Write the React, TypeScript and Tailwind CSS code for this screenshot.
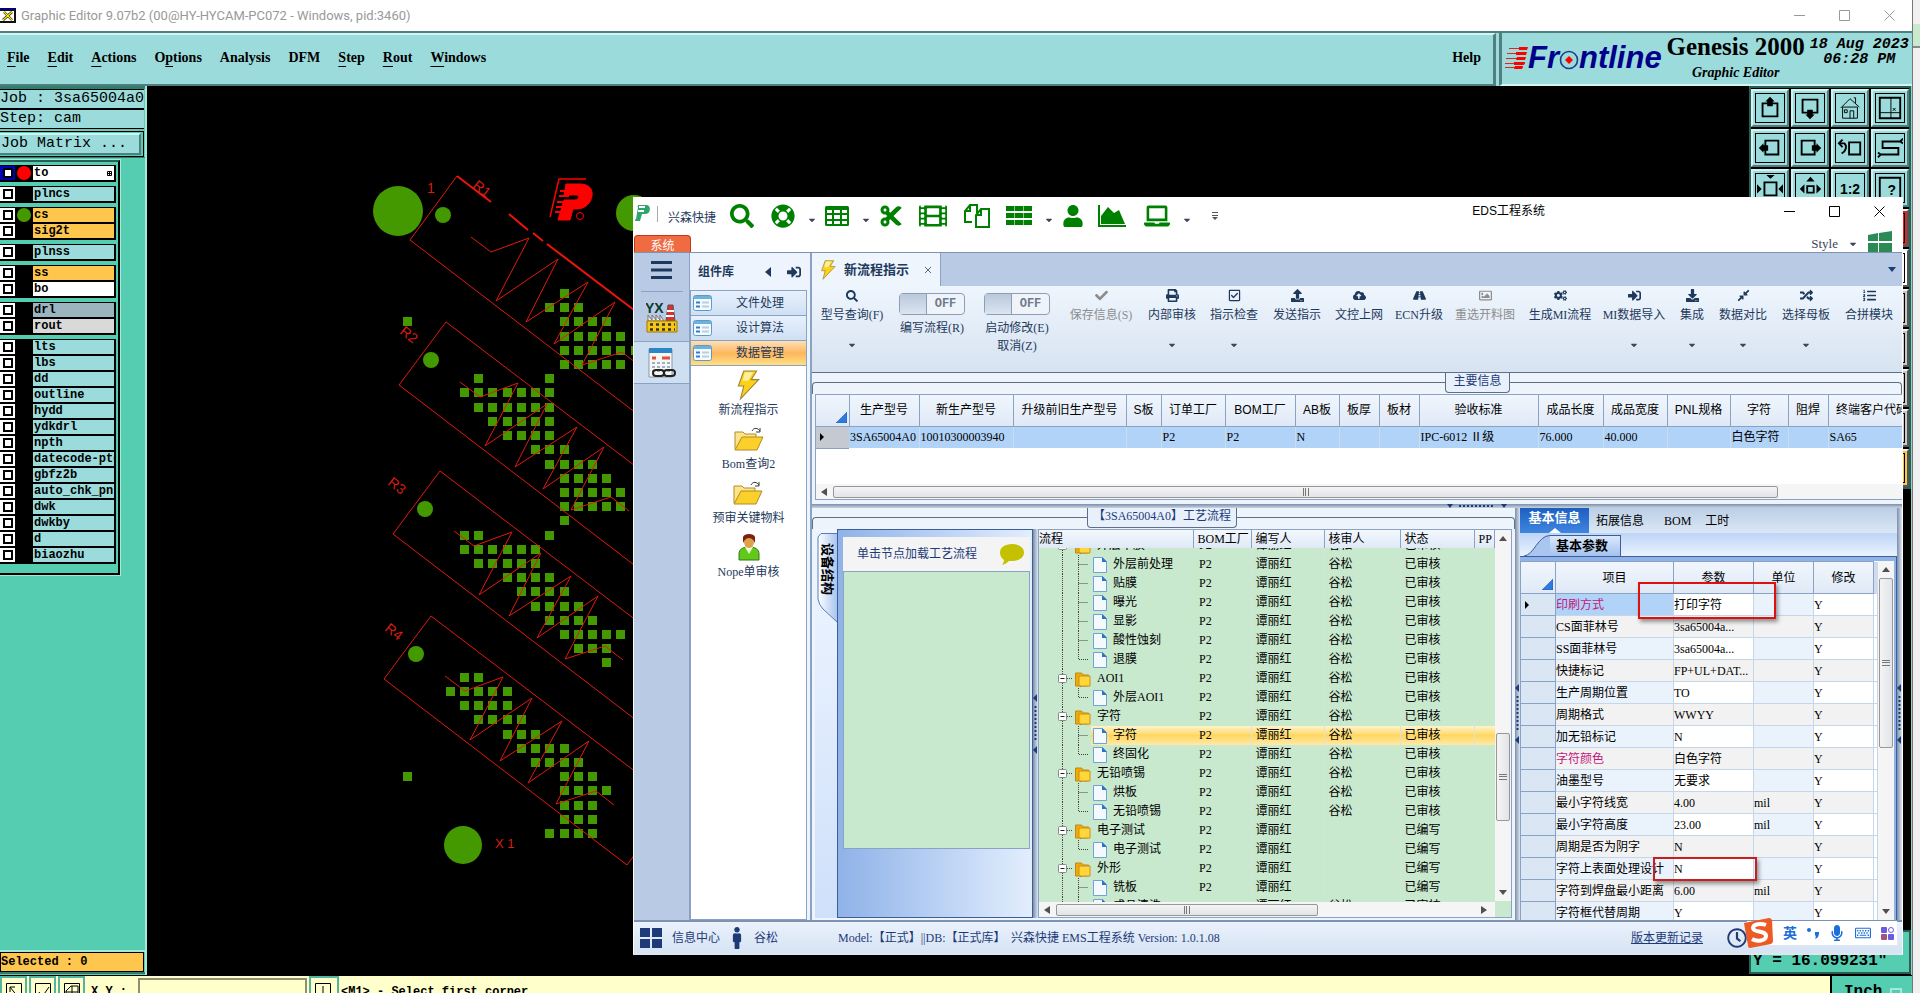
import type { ReactNode } from 'react';
import {
  FaSearch, FaLifeRing, FaCut, FaFilm, FaUser, FaLaptop, FaCheck, FaPrint, FaRegCheckSquare,
  FaUpload, FaCloudUploadAlt, FaRoad, FaRegImage, FaCogs, FaSignInAlt, FaDownload,
  FaCompressAlt, FaRandom, FaListOl, FaMale, FaRegClock, FaMicrophone, FaRegKeyboard, FaCaretDown,
} from 'react-icons/fa';

const song = "font-['Liberation_Serif','Noto_Sans_CJK_SC',serif]";
const hei = "font-['Liberation_Sans','Noto_Sans_CJK_SC',sans-serif]";
const mono = "font-['Liberation_Mono',monospace]";
const times = "font-['Liberation_Serif',serif]";

const menus = [
  ['', 'F', 'ile'], ['', 'E', 'dit'], ['', 'A', 'ctions'], ['O', 'p', 'tions'], ['Analysis', '', ''],
  ['DFM', '', ''], ['', 'S', 'tep'], ['', 'R', 'out'], ['', 'W', 'indows'],
];

interface Layer {
  name: string;
  bg: string;
  dot?: string;
  active?: boolean;
}

const cyan = 'bg-[#9bdbdb]';
const amber = 'bg-[#fec64d]';

const layerGroups: Layer[][] = [
  [{ name: 'to', bg: 'bg-white', dot: 'bg-[#ff0000]', active: true }],
  [{ name: 'plncs', bg: cyan }],
  [{ name: 'cs', bg: amber, dot: 'bg-[#459900]' }, { name: 'sig2t', bg: amber }],
  [{ name: 'plnss', bg: cyan }],
  [{ name: 'ss', bg: amber }, { name: 'bo', bg: 'bg-white' }],
  [{ name: 'drl', bg: 'bg-[#9bb5bf]' }, { name: 'rout', bg: 'bg-[#d9d9d9]' }],
  ['lts', 'lbs', 'dd', 'outline', 'hydd', 'ydkdrl', 'npth', 'datecode-ptd', 'gbfz2b', 'auto_chk_pnl', 'dwk', 'dwkby', 'd', 'biaozhu'].map(
    (name) => ({ name, bg: cyan })
  ),
];

// columns filled with a copper square, row by row, as [first, last] ranges
const copper: number[][][] = [
  [[7, 7]], [[6, 8]], [[-4, -4], [7, 10]], [[7, 11]], [[7, 12]], [[7, 11]], [[1, 1], [6, 6]], [[0, 6]],
  [[1, 6]], [[2, 6]], [[3, 6]], [[5, 7]], [[6, 9]], [[7, 10]], [[7, 11]], [[7, 11]], [[7, 7]],
  [[0, 1], [6, 6]], [[0, 5]], [[1, 5]], [[3, 6]], [[4, 7]], [[5, 8]], [[6, 9]], [[7, 11]], [[8, 10]],
  [[10, 10]], [[0, 1]], [[-1, 3]], [[0, 3]], [[1, 4]], [[3, 5]], [[4, 7]], [[5, 8]], [[-4, -4], [7, 9]],
  [[7, 10]], [[7, 9]], [[7, 9]], [[6, 9]],
];

const resistors = [
  { label: 'R2', dx: -11, dy: 145, tx: 399, ty: 333 },
  { label: 'R3', dx: -17, dy: 294, tx: 387, ty: 484 },
  { label: 'R4', dx: -26, dy: 439, tx: 384, ty: 630 },
];

const zigzag = '471,237 491,252 529,238 496,301 558,259 526,322 588,282 554,344 615,302 582,365 622,352 640,366';

const ribbon: { label: string; w: string; icon: ReactNode; caret?: boolean; off?: boolean }[] = [
  { label: '保存信息(S)', w: 'w-[86px]', icon: <FaCheck />, off: true },
  { label: '内部审核', w: 'w-[56px]', icon: <FaPrint />, caret: true },
  { label: '指示检查', w: 'w-[68px]', icon: <FaRegCheckSquare />, caret: true },
  { label: '发送指示', w: 'w-[58px]', icon: <FaUpload /> },
  { label: '文控上网', w: 'w-[66px]', icon: <FaCloudUploadAlt /> },
  { label: 'ECN升级', w: 'w-[54px]', icon: <FaRoad /> },
  { label: '重选开料图', w: 'w-[78px]', icon: <FaRegImage />, off: true },
  { label: '生成MI流程', w: 'w-[72px]', icon: <FaCogs /> },
  { label: 'MI数据导入', w: 'w-[76px]', icon: <FaSignInAlt />, caret: true },
  { label: '集成', w: 'w-[40px]', icon: <FaDownload />, caret: true },
  { label: '数据对比', w: 'w-[62px]', icon: <FaCompressAlt />, caret: true },
  { label: '选择母板', w: 'w-[64px]', icon: <FaRandom />, caret: true },
  { label: '合拼模块', w: 'w-[62px]', icon: <FaListOl /> },
];

const mainCols: [string, string, string][] = [
  ['生产型号', 'w-[70px]', '3SA65004A0'],
  ['新生产型号', 'w-[94px]', '10010300003940'],
  ['升级前旧生产型号', 'w-[113px]', ''],
  ['S板', 'w-[35px]', ''],
  ['订单工厂', 'w-[64px]', 'P2'],
  ['BOM工厂', 'w-[70px]', 'P2'],
  ['AB板', 'w-[44px]', 'N'],
  ['板厚', 'w-[40px]', ''],
  ['板材', 'w-[40px]', ''],
  ['验收标准', 'w-[119px]', 'IPC-6012 Ⅱ级'],
  ['成品长度', 'w-[65px]', '76.000'],
  ['成品宽度', 'w-[64px]', '40.000'],
  ['PNL规格', 'w-[63px]', ''],
  ['字符', 'w-[58px]', '白色字符'],
  ['阻焊', 'w-[40px]', ''],
  ['终端客户代码', 'w-[88px]', 'SA65'],
];

interface Node {
  name: string;
  folder?: boolean;
  last?: boolean;
  checker?: string;
  state?: string;
  selected?: boolean;
}

const tree: Node[] = [
  { name: '外层干膜', folder: true },
  { name: '外层前处理' },
  { name: '贴膜' },
  { name: '曝光' },
  { name: '显影' },
  { name: '酸性蚀刻' },
  { name: '退膜', last: true },
  { name: 'AOI1', folder: true },
  { name: '外层AOI1', last: true },
  { name: '字符', folder: true },
  { name: '字符', selected: true },
  { name: '终固化', last: true },
  { name: '无铅喷锡', folder: true },
  { name: '烘板' },
  { name: '无铅喷锡', last: true },
  { name: '电子测试', folder: true, checker: '', state: '已编写' },
  { name: '电子测试', last: true, checker: '', state: '已编写' },
  { name: '外形', folder: true, checker: '', state: '已编写' },
  { name: '铣板', checker: '', state: '已编写' },
  { name: '成品清洗' },
];

const params: [string, string, string, boolean?][] = [
  ['印刷方式', '打印字符', '', true],
  ['CS面菲林号', '3sa65004a...', ''],
  ['SS面菲林号', '3sa65004a...', ''],
  ['快捷标记', 'FP+UL+DAT...', ''],
  ['生产周期位置', 'TO', ''],
  ['周期格式', 'WWYY', ''],
  ['加无铅标记', 'N', ''],
  ['字符颜色', '白色字符', '', true],
  ['油墨型号', '无要求', ''],
  ['最小字符线宽', '4.00', 'mil'],
  ['最小字符高度', '23.00', 'mil'],
  ['周期是否为阴字', 'N', ''],
  ['字符上表面处理设计', 'N', ''],
  ['字符到焊盘最小距离', '6.00', 'mil'],
  ['字符框代替周期', 'Y', ''],
];

function WindowButtons({ color }: { color: string }) {
  return (
    <div className={`flex ${color}`}>
      <button aria-label="Minimize" className="flex h-7 w-[45px] items-center justify-center">
        <svg width="11" height="11"><path d="M0 5.5h11" stroke="currentColor" /></svg>
      </button>
      <button aria-label="Maximize" className="flex h-7 w-[45px] items-center justify-center">
        <svg width="11" height="11"><path d="M.5 .5h10v10h-10z" fill="none" stroke="currentColor" /></svg>
      </button>
      <button aria-label="Close" className="flex h-7 w-[45px] items-center justify-center">
        <svg width="11" height="11"><path d="M.5 .5l10 10M10.5 .5l-10 10" stroke="currentColor" /></svg>
      </button>
    </div>
  );
}

function FrontlineLogo() {
  return (
    <div className="flex h-9 items-center font-['Liberation_Sans',sans-serif] text-[31px] leading-9 font-bold text-[#00008b] italic">
      <svg width="23" height="26" viewBox="0 0 23 26" className="shrink-0">
        <g stroke="#e8201c" strokeWidth="1">
          <path d="M4 3.5h18M2 8.5h18M1 13.5h19M0 18.5h20M0 22.5h18" />
        </g>
        <g fill="#f00">
          <path d="M14 2h9l-1 3h-8zM11 7h11l-1 3H11zM12 12h9l-1 3h-9zM9 17h11l-1 3H9zM10 21h8l-1 3h-8z" />
        </g>
      </svg>
      Fr
      <svg width="20" height="20" viewBox="0 0 20 20" className="mt-1 shrink-0">
        <circle cx="10" cy="10" r="8.5" fill="none" stroke="#1c3c8c" strokeWidth="1.6" />
        <path d="M10 6l4 4-4 4-4-4z" fill="#f00" />
      </svg>
      ntline
    </div>
  );
}

function EditorHeader() {
  return (
    <>
      <header className="flex h-[31px] shrink-0 items-center bg-white">
        <svg width="16" height="16" viewBox="0 0 16 16" className="mr-[5px] shrink-0">
          <path d="M0 0h16v15H0z" fill="#111" />
          <path d="M0 3h14v10H0z" fill="#fff" />
          <path d="M0 0h16v2H0z" fill="#00007b" />
          <path d="M4 4l8 8M12 4l-9 8" stroke="#111" strokeWidth="2.4" />
          <path d="M4 4l8 8M12 4l-9 8" stroke="#ffef00" strokeWidth="1.2" />
        </svg>
        <h1 className="grow font-[Roboto,sans-serif] text-[13px] leading-4 whitespace-nowrap text-[#999]">
          Graphic Editor 9.07b2 (00@HY-HYCAM-PC072 - Windows, pid:3460)
        </h1>
        <WindowButtons color="text-[#999]" />
      </header>
      <div className={`flex h-[55px] shrink-0 border-t-2 border-[#4f7f7f] bg-[#9bdbdb] ${times}`}>
        <nav className="flex grow items-center gap-[18px] border-t-2 border-r-[3px] border-b-2 border-t-[#d5f3f3] border-r-[#4f7f7f] border-b-[#4f7f7f] pr-3 pb-1 pl-[7px] text-sm leading-4 font-bold">
          {menus.map(([pre, key, post]) => (
            <button key={pre + key + post}>
              {pre}
              <span className="underline underline-offset-4">{key}</span>
              {post}
            </button>
          ))}
          <button className="ml-auto">Help</button>
        </nav>
        <div className="ml-[3px] flex w-[413px] items-start border-b-2 border-l-[3px] border-b-[#d5f3f3] border-l-[#4f7f7f] pl-[3px]">
          <div className="pt-[7px]"><FrontlineLogo /></div>
          <div className="flex w-[148px] flex-col items-center">
            <span className="text-[25px] leading-7 font-bold whitespace-nowrap">Genesis 2000</span>
            <span className="pt-1 text-sm leading-4 font-bold italic">Graphic Editor</span>
          </div>
          <div className={`${mono} pt-1 text-center text-[15px] leading-[15px] font-bold whitespace-nowrap italic`}>
            18 Aug 2023<br />06:28 PM
          </div>
        </div>
      </div>
    </>
  );
}

function LayerPanel() {
  return (
    <aside className={`flex w-[147px] shrink-0 flex-col border-r-2 border-[#a5e8dc] bg-[#54cdb0] ${mono}`}>
      <div className="border-t-[3px] border-b border-[#2f7d6d] bg-[#6fc4b4] pr-px">
        <p className="h-5 border border-x-0 border-black bg-[#9bdbdb] text-[15px] leading-[18px] whitespace-nowrap">Job : 3sa65004a0</p>
        <p className="h-5 border border-x-0 border-black bg-[#9bdbdb] text-[15px] leading-[18px] whitespace-nowrap">Step: cam</p>
        <div className="mt-0.5 border border-l-0 border-black bg-[#54cdb0] py-px pr-0.5">
          <button className="block h-[22px] w-full border-t-2 border-r-2 border-b-2 border-t-[#cdf3f3] border-r-[#4f7f7f] border-b-[#4f7f7f] bg-[#9bdbdb] pl-px text-left text-[15px] leading-[18px]">
            Job Matrix ...
          </button>
        </div>
      </div>
      <div className="mt-0.5 flex w-[120px] flex-col gap-1 border-t-2 border-r-2 border-b-2 border-t-[#2a5f55] border-r-black border-b-black pt-[3px] pb-[9px] outline-1 outline-[#a5e8dc]">
        {layerGroups.map((group) => (
          <ul key={group[0].name} className="mr-0.5 bg-black pb-px">
            {group.map((l) => (
              <li key={l.name} className="flex h-4 items-center">
                <span className={`flex h-3.5 w-[15px] shrink-0 items-center justify-center ${l.active ? 'bg-[#0000b8]' : 'bg-white'}`}>
                  <span className="h-2.5 w-2.5 border-2 border-black bg-white" />
                </span>
                <span className={`mx-0.5 h-3.5 w-3.5 shrink-0 rounded-full ${l.dot ?? 'bg-black'}`} />
                <span className={`mr-0.5 flex h-3.5 min-w-0 grow items-center overflow-hidden pl-px text-xs leading-3.5 font-bold whitespace-nowrap ${l.bg}`}>
                  {l.name}
                  {l.active && (
                    <svg width="5" height="5" viewBox="0 0 5 5" className="mr-0.5 ml-auto">
                      <path d="M.5 .5h4v4h-4zM2.5 0v5M0 2.5h5" fill="none" stroke="#000" />
                    </svg>
                  )}
                </span>
              </li>
            ))}
          </ul>
        ))}
      </div>
      <div className="mt-auto mb-px border-y-2 border-t-[#a5e8dc] border-b-[#2f7d6d] pr-px">
        <p className="h-5 border border-black bg-[#fec64d] text-xs leading-[18px] font-bold">Selected : 0</p>
      </div>
    </aside>
  );
}

function Board() {
  return (
    <svg width="500" height="889" viewBox="147 86 500 889" className="shrink-0">
      <g fill="#459900" shapeRendering="crispEdges">
        {copper.map((ranges, row) =>
          ranges.map(([from, to]) =>
            Array.from({ length: to - from + 1 }, (_, i) => (
              <rect key={`${row}-${from + i}`} x={Math.round(460 + 14.22 * (from + i))} y={Math.round(289 + 14.21 * row)} width="9" height="9" />
            ))
          )
        )}
      </g>
      <g fill="#459900">
        <circle cx="398" cy="211" r="25" />
        <circle cx="443" cy="215" r="8" />
        <circle cx="634" cy="213" r="18" />
        <circle cx="431" cy="360" r="8" />
        <circle cx="425" cy="509" r="8" />
        <circle cx="416" cy="654" r="8" />
        <circle cx="463" cy="845" r="19" />
      </g>
      <g fill="none" stroke="#e01a0e">
        <path d="M457 176L410 240L653 426" />
        <path d="M457 176L491 202M509 214L528 230M533 233L543 241M547 244L634 310" strokeWidth="2" stroke="#f01408" />
        <polyline points={zigzag} />
        {resistors.map((r) => (
          <g key={r.label} transform={`translate(${r.dx} ${r.dy})`}>
            <polygon points="457,177 410,240 653,426 700,362" />
            <polyline points={zigzag} />
          </g>
        ))}
      </g>
      <g fill="#d91e10" fontFamily="Liberation Sans, sans-serif" fontSize="14">
        <text x="427" y="193">1</text>
        <text transform="translate(472 187) rotate(38)">R1</text>
        {resistors.map((r) => (
          <text key={r.label} transform={`translate(${r.tx} ${r.ty}) rotate(38)`}>{r.label}</text>
        ))}
        <text x="495" y="848" fontSize="13">X 1</text>
      </g>
      <g stroke="#f00" fill="none">
        <path d="M586 179h-27l-9 38" strokeWidth="1.5" />
        <path d="M566 184h14c9 0 13 5 12 12s-7 13-15 13h-4l-3 11h-12l6-20h11c4 0 5-5 1-5h-12z" fill="#f00" />
        <path d="M560 191h10M559 196h10M557 202h10M556 207h8M555 212h8" strokeWidth="2" />
        <circle cx="580" cy="216" r="3.5" />
      </g>
    </svg>
  );
}

const viewIcons: ReactNode[] = [
  <g key="u"><path d="M6 9h16v14H6z" fill="none" stroke="#000" strokeWidth="2" /><path d="M14 2l5 5h-2v5h-6V7H9z" /></g>,
  <g key="d"><path d="M6 5h16v14H6z" fill="none" stroke="#000" strokeWidth="2" /><path d="M14 26l5-5h-2v-5h-6v5H9z" /></g>,
  <g key="h" fill="none" stroke="#000"><path d="M6 13h16v12H6zM4 14L14 4l10 9M20 9V3h-2M14 25v-8h4v8M8 16h3v3H8z" /></g>,
  <g key="xy" fill="none" stroke="#000"><path d="M3 3h22v22H3z" strokeWidth="2" /><path d="M15 3v22M3 19h22M17 14l3 3M20 14l-3 3" /></g>,
  <g key="l"><path d="M9 6h14v15H9z" fill="none" stroke="#000" strokeWidth="2" /><path d="M2 14l5-5v2h5v6H7v2z" /></g>,
  <g key="r"><path d="M5 6h14v15H5z" fill="none" stroke="#000" strokeWidth="2" /><path d="M26 14l-5-5v2h-5v6h5v2z" /></g>,
  <g key="b"><path d="M13 8h12v13H13z" fill="none" stroke="#000" strokeWidth="2" /><path d="M3 9h5c3 3 2 8-3 11M6 5L2 9l4 4" fill="none" stroke="#000" strokeWidth="2" /></g>,
  <g key="s"><path d="M25 7H6v7h17v7H4M25 7l3-3M25 7l3 2M4 21l-3-2M4 21l-3 3" fill="none" stroke="#000" strokeWidth="2" /></g>,
  <g key="in"><path d="M8 8h13v14H8z" fill="none" stroke="#000" strokeWidth="2" /><path d="M10 0h9l-4.500 4zM0 10l5 5-5 5zM28 10l-5 5 5 5z" /></g>,
  <g key="out"><path d="M11 12h7v7h-7z" fill="none" stroke="#000" strokeWidth="2" /><path d="M10 7h9l-4.500-5zM8 10v10l-5-5zM21 10v10l5-5zM10 24h9l-4.500 4z" /></g>,
  <text key="t" x="14" y="20" textAnchor="middle" fontSize="15" fontWeight="bold" fontFamily="Liberation Sans, sans-serif">1:2</text>,
  <g key="q"><path d="M3 3h22v26H3z" fill="none" stroke="#000" strokeWidth="2" /><text x="16" y="21" textAnchor="middle" fontSize="15" fontWeight="bold" fontFamily="Liberation Sans, sans-serif">?</text></g>,
];

function ToolPad() {
  const tail = ['bg-[#d42a2a]', 'bg-white', 'bg-[#c9c9c9]', 'bg-[#c9c9c9]', 'bg-[#c9c9c9]', 'bg-[#c9c9c9]', 'bg-[#fec64d]'];
  return (
    <aside className="flex w-[163px] shrink-0 flex-col border-r border-[#8fd5c6] bg-black">
      <div className="grid grid-cols-4 gap-0.5 border-2 border-[#2a5f55] bg-black pt-px">
        {viewIcons.map((icon, i) => (
          <button key={i} aria-label="View tool" className="h-[38px] border-2 border-t-[#d5f3f3] border-r-[#4f7f7f] border-b-[#4f7f7f] border-l-[#d5f3f3] bg-[#9bdbdb] p-0.5">
            <span className="flex h-full items-center justify-center border border-black">
              <svg width="26" height="26" viewBox="0 0 28 28">{icon}</svg>
            </span>
          </button>
        ))}
        {tail.map((bg, i) => (
          <button key={i} aria-label="Edit tool" className={`col-start-4 h-[38px] border-2 border-t-[#eee] border-r-[#555] border-b-[#555] border-l-[#eee] p-0.5 ${bg}`}>
            <span className="block h-full border border-black" />
          </button>
        ))}
      </div>
      <p className={`mt-auto mb-px flex h-11 items-end border-2 border-[#2a5f55] bg-[#54cdb0] pb-[3px] pl-0.5 text-base leading-4 font-bold whitespace-nowrap ${mono}`}>
        Y = 16.099231"
      </p>
    </aside>
  );
}

function CommandBar() {
  const marks = ['M4 4l8 10M4 4v5M4 4h5', 'M4 9l3 5 7-10', 'M2 14V8l5-5h7v11M8 3v11M2 9h12'];
  return (
    <footer className={`flex h-[18px] shrink-0 overflow-hidden border-t border-black bg-[#ffffcc] text-sm font-bold ${mono}`}>
      {marks.map((d) => (
        <button key={d} aria-label="Snap mode" className="mr-0.5 h-8 w-[27px] shrink-0 border-2 border-[#54b59e] bg-[#ffffcc] px-1 pt-0.5">
          <svg width="16" height="20"><path d="M.5 .5h15v20h-15z" fill="none" stroke="#000" /><path d={d} fill="none" stroke="#000" /></svg>
        </button>
      ))}
      <label htmlFor="xy" className="w-[51px] shrink-0 pt-2 pl-1 text-xs leading-4 whitespace-pre">X Y :</label>
      <input id="xy" className="mt-0.5 h-8 w-[169px] shrink-0 border-2 border-[#8f8f72] bg-[#ffffcc] px-1" />
      <button aria-label="Info" className="ml-0.5 h-8 w-[30px] shrink-0 border-2 border-[#54b59e] px-1 pt-0.5">
        <svg width="16" height="20"><path d="M.5 .5h15v20h-15zM8 3v14" fill="none" stroke="#000" /></svg>
      </button>
      <output className="grow pt-2 pl-0.5 text-xs leading-4 whitespace-nowrap">&lt;M1&gt; - Select first corner</output>
      <button className={`flex h-8 w-20 shrink-0 gap-2 border-4 border-[#54cdb0] bg-[#54cdb0] pt-1 pl-2 text-base leading-4 outline-2 outline-black ${mono}`}>
        Inch
        <span className="mt-1 h-3 w-3 border-2 border-[#a5e8dc]" />
      </button>
    </footer>
  );
}

function Caret() {
  return <FaCaretDown className="h-2.5 w-2.5 shrink-0 text-[#3b4659]" />;
}

function QuickAccess() {
  return (
    <div className="flex items-center text-2xl text-[#008000]">
      <button aria-label="Search"><FaSearch /></button>
      <button aria-label="Help" className="ml-[17px]"><FaLifeRing /></button>
      <span className="ml-3 pt-2"><Caret /></span>
      <button aria-label="Table" className="ml-2">
        <svg width="24" height="20" viewBox="0 0 24 20">
          <rect width="24" height="20" rx="1.500" fill="currentColor" />
          <path d="M2 4h5v3H2zM9 4h6v3H9zM17 4h5v3h-5zM2 9h5v4H2zM9 9h6v4H9zM17 9h5v4h-5zM2 15h5v3H2zM9 15h6v3H9zM17 15h5v3h-5z" fill="#fff" />
        </svg>
      </button>
      <span className="ml-3 pt-2"><Caret /></span>
      <button aria-label="Cut" className="ml-2"><FaCut /></button>
      <button aria-label="Film" className="ml-4"><FaFilm className="h-7 w-7" /></button>
      <button aria-label="Copy" className="ml-[17px]">
        <svg width="26" height="24" viewBox="0 0 26 24" fill="none" stroke="currentColor" strokeWidth="2">
          <path d="M8 18H1V7l5-6h7v8M6 1v6H1M12 23V11l5-6h8v18zM17 5v6h-5" />
        </svg>
      </button>
      <button aria-label="Rows" className="ml-4">
        <svg width="26" height="20" viewBox="0 0 26 20">
          <path d="M0 0h26v5H0zM0 7h26v5H0zM0 14h26v5H0z" fill="currentColor" />
          <path d="M8.500 0v20M17.500 0v20" stroke="#fff" strokeOpacity=".55" />
        </svg>
      </button>
      <span className="ml-3 pt-2"><Caret /></span>
      <button aria-label="User" className="ml-2"><FaUser className="h-[22px] w-[22px]" /></button>
      <button aria-label="Chart" className="ml-3.5">
        <svg width="28" height="22" viewBox="0 0 28 22">
          <path d="M1 0v21h27" fill="none" stroke="currentColor" strokeWidth="2" />
          <path d="M3 19v-8l7-9 6 6 5-3 6 14z" fill="currentColor" />
        </svg>
      </button>
      <button aria-label="Laptop" className="ml-[18px]"><FaLaptop className="h-[26px] w-[26px]" /></button>
      <span className="ml-3 pt-2"><Caret /></span>
      <svg width="6" height="8" viewBox="0 0 6 8" className="ml-5"><path d="M0 .5h6M0 3.500h6" stroke="#555" /><path d="M0 5h6L3 8z" fill="#555" /></svg>
    </div>
  );
}

function Bolt({ size }: { size: number }) {
  return (
    <svg width={size} height={size} viewBox="0 0 24 28" className="shrink-0">
      <path d="M8 1h12l-5 8h7L5 27l3-12H3z" fill="#fbd11a" stroke="#a08038" />
      <path d="M9 2h8l-5 8H7z" fill="#fff19a" />
    </svg>
  );
}

function Folder() {
  return (
    <svg width="30" height="24" viewBox="0 0 30 24">
      <path d="M1 22V5h8l2 2h11v4" fill="#fde48a" stroke="#b08c28" />
      <path d="M1 23l7-13h21l-6 13z" fill="#fbd02a" stroke="#b08c28" />
      <path d="M18 4c2-4 6-3 8 0M26 1v4h-4" fill="none" stroke="#3b3b3b" />
    </svg>
  );
}

function Person() {
  return (
    <svg width="22" height="28" viewBox="0 0 22 28">
      <path d="M1 27v-6c0-5 4-7 10-7s10 2 10 7v6z" fill="#62c81a" stroke="#2f7d10" />
      <path d="M7 14l4 7 4-7z" fill="#e8ffd8" />
      <ellipse cx="11" cy="9" rx="5" ry="6" fill="#e0a04c" />
      <path d="M5 10V4c1-4 11-4 12 0v6c-2-4-4-5-6-5s-4 1-6 5z" fill="#7c2210" />
    </svg>
  );
}

function ComponentLibrary() {
  const groups = ['文件处理', '设计算法', '数据管理'];
  const items: [string, ReactNode][] = [
    ['新流程指示', <Bolt key="b" size={30} />],
    ['Bom查询2', <Folder key="f" />],
    ['预审关键物料', <Folder key="g" />],
    ['Nope单审核', <Person key="p" />],
  ];
  return (
    <div className={`flex w-[122px] shrink-0 flex-col border-x border-[#8aa3c4] bg-[#edf4fd] pr-[3px] text-[#1e395b] ${song}`}>
      <div className="flex h-[37px] shrink-0 items-center gap-3 pl-2 text-xs font-bold">
        <h2 className="grow">组件库</h2>
        <svg width="6" height="10" className="mr-1"><path d="M6 0v10L0 5z" fill="currentColor" /></svg>
        <FaSignInAlt className="mr-1.5 h-3.5 w-3.5" />
      </div>
      {groups.map((g, i) => (
        <button
          key={g}
          className={`flex h-[25px] shrink-0 items-center border border-b-0 border-[#8aa3c4] bg-linear-to-b text-xs ${
            i === 2 ? 'from-[#fde0b5] via-[#fdb75c] to-[#fedf85]' : 'from-[#e8f1fc] to-[#cfe0f4]'
          }`}
        >
          <svg width="19" height="16" viewBox="0 0 19 16" className="mx-0.5 shrink-0">
            <rect x=".5" y=".5" width="18" height="15" rx="2" fill="#f4faff" stroke="#5b9bc8" />
            <path d="M1 2.500h17" stroke="#6cb2dd" strokeWidth="3" />
            <path d="M3 7.500h4M3 11.500h4" stroke="#2f7fd1" strokeWidth="2" />
            <path d="M9 7.500h7M9 11.500h7" stroke="#b9cede" strokeWidth="2" />
          </svg>
          <span className="grow text-center">{g}</span>
        </button>
      ))}
      <div className="flex grow flex-col items-center border border-[#8aa3c4] bg-white pt-[3px] text-xs">
        {items.map(([label, icon]) => (
          <button key={label} className="flex h-[54px] flex-col items-center justify-between pb-1">
            <span className="flex h-8 items-center">{icon}</span>
            <span className="leading-[18px]">{label}</span>
          </button>
        ))}
      </div>
    </div>
  );
}

function IconRail() {
  return (
    <div className="flex w-[55px] shrink-0 flex-col items-center bg-[#b9cbe4]">
      <button aria-label="Menu" className="flex h-[39px] w-[42px] items-center justify-center border-b border-[#8aa3c4] pb-1">
        <svg width="21" height="18"><path d="M0 1.500h21M0 9h21M0 16.500h21" stroke="#1e395b" strokeWidth="3" /></svg>
      </button>
      <button aria-label="Factory" className="flex h-[49px] items-center">
        <svg width="32" height="32" viewBox="0 0 32 32">
          <text x="-1" y="12" fontSize="14" fontWeight="bold" fontFamily="Liberation Sans, sans-serif" fill="#0d3b2c">YX</text>
          <path d="M20 20l2-16h5l2 16z" fill="#d93030" stroke="#555" />
          <path d="M21 10h7M20 15h8" stroke="#fff" strokeWidth="2" />
          <path d="M2 20v-6l4 5v-5l4 5v-5l4 5v-5l4 6z" fill="#eee" stroke="#777" />
          <path d="M1 20h30v11H1z" fill="#f5c518" stroke="#a07b00" />
          <path d="M4 23.500h25M4 28.500h25" stroke="#333" strokeWidth="2.500" strokeDasharray="3 3" />
        </svg>
      </button>
      <button aria-label="Calendar" className="flex h-[43px] w-full items-center justify-center border-y border-[#8aa3c4] bg-[#cfdff2]">
        <svg width="32" height="32" viewBox="0 0 32 32">
          <path d="M3 2h23v28H3z" fill="#f6f6f6" stroke="#8b98a8" />
          <path d="M3 1h23v5H3z" fill="#2c86c4" />
          <path d="M6 11h4M16 11h8" stroke="#e0503a" strokeWidth="3" />
          <path d="M6 16h18M6 20h18M6 24h18" stroke="#9fb0c2" strokeWidth="2" strokeDasharray="3 2" />
          <rect x="7" y="23" width="11" height="6" rx="3" fill="none" stroke="#222" strokeWidth="2" />
          <rect x="18" y="23" width="11" height="6" rx="3" fill="none" stroke="#222" strokeWidth="2" />
        </svg>
      </button>
    </div>
  );
}

function Toggle({ lines, w }: { lines: string[]; w: string }) {
  return (
    <div className={`flex shrink-0 flex-col items-center pt-[7px] ${w}`}>
      <button role="switch" aria-checked="false" aria-label={lines[0]} className="flex h-[22px] w-[66px] rounded-sm border border-[#8d9eb5] bg-[#eff4fa]">
        <span className="h-full w-[27px] border-r border-[#8d9eb5] bg-linear-to-b from-[#b9c8da] to-[#dbe5f1]" />
        <span className={`grow text-xs leading-5 font-bold text-[#6d7b8c] ${mono}`}>OFF</span>
      </button>
      {lines.map((l, i) => (
        <span key={l} className={`leading-4 ${i ? 'pt-0.5' : 'pt-[5px]'}`}>{l}</span>
      ))}
    </div>
  );
}

function Ribbon() {
  return (
    <div className="flex h-[87px] shrink-0 overflow-hidden border-b border-[#5f6f88] bg-linear-to-b from-[#eef5fd] to-[#d7e3f1] pl-1 text-xs whitespace-nowrap text-[#1e395b]">
      <button className="flex w-[72px] shrink-0 flex-col items-center pt-0.5">
        <FaSearch className="mt-0.5 h-3 w-3" />
        <span className="pt-1 leading-[18px]">型号查询(F)</span>
        <span className="pt-4"><Caret /></span>
      </button>
      <Toggle w="w-[88px]" lines={['编写流程(R)']} />
      <Toggle w="w-[82px]" lines={['启动修改(E)', '取消(Z)']} />
      {ribbon.map((b) => (
        <button key={b.label} disabled={b.off} className={`flex shrink-0 flex-col items-center pt-0.5 ${b.w} ${b.off ? 'text-[#8d8d8d]' : ''}`}>
          <span className="flex h-3.5 items-center text-[13px]">{b.icon}</span>
          <span className="pt-1 leading-[18px]">{b.label}</span>
          {b.caret && <span className="pt-4"><Caret /></span>}
        </button>
      ))}
    </div>
  );
}

function HScroll({ thumb, right }: { thumb: string; right?: boolean }) {
  return (
    <div className="flex h-[15px] shrink-0 items-center bg-[#f5f5f5] px-1">
      <svg width="6" height="8" className="mr-1.5 ml-px shrink-0"><path d="M6 0v8L0 4z" fill="#505050" /></svg>
      <div className={`flex h-3 items-center justify-center rounded-xs border border-[#979797] bg-linear-to-b from-[#f4f4f4] to-[#e2e4e8] ${thumb}`}>
        <span className="h-2 w-[3px] border-x border-[#777]" />
        <span className="h-2 w-[3px] border-r border-[#777]" />
      </div>
      {right && <svg width="6" height="8" className="mr-1 ml-auto shrink-0"><path d="M0 0v8l6-4z" fill="#505050" /></svg>}
    </div>
  );
}

function VScroll({ before, thumb }: { before: string; thumb: string }) {
  return (
    <div className="flex w-4 shrink-0 flex-col items-center bg-[#f5f5f5]">
      <svg width="8" height="5" className="my-1.5 shrink-0"><path d="M0 5h8L4 0z" fill="#505050" /></svg>
      <div className={before} />
      <div className={`flex w-3.5 flex-col items-center justify-center rounded-xs border border-[#979797] bg-linear-to-r from-[#f4f4f4] to-[#e2e4e8] ${thumb}`}>
        <span className="h-[3px] w-2 border-y border-[#777]" />
        <span className="h-[3px] w-2 border-b border-[#777]" />
      </div>
      <svg width="8" height="5" className="mt-auto mb-1.5 shrink-0"><path d="M0 0h8L4 5z" fill="#505050" /></svg>
    </div>
  );
}

function CornerMark() {
  return (
    <svg width="11" height="11" className="mt-3.5 mr-0.5 ml-auto"><path d="M11 0v11H0z" fill="#2f7ae0" stroke="#1c4fa0" strokeWidth=".5" /></svg>
  );
}

function GroupTitle({ children, w, lead }: { children: ReactNode; w: string; lead: string }) {
  return (
    <div className={`flex h-[21px] shrink-0 items-start text-xs text-[#1e3a78] ${song}`}>
      <span className={`mt-[9px] h-3 rounded-tl border-t border-l border-[#5f6f88] ${lead}`} />
      <span className={`h-5 shrink-0 rounded-b border border-t-0 border-[#5f6f88] bg-[#e8f0fb] text-center leading-4 whitespace-nowrap ${w}`}>{children}</span>
      <span className="mt-[9px] h-3 grow rounded-tr border-t border-r border-[#5f6f88]" />
    </div>
  );
}

function MainGrid() {
  return (
    <section className="flex h-[131px] shrink-0 flex-col bg-[#eef4fc]">
      <GroupTitle w="w-[65px]" lead="w-[633px]">主要信息</GroupTitle>
      <div className="ml-[3px] flex grow flex-col overflow-hidden border border-r-0 border-[#8aa3c4] bg-white">
        <table className="w-[1100px] table-fixed border-collapse text-xs whitespace-nowrap">
          <thead>
            <tr className={`h-[31px] bg-linear-to-b from-[#f1f6fd] to-[#dfe9f6] ${hei}`}>
              <th className="w-[33px] border border-t-0 border-l-0 border-[#8aa3c4] p-0"><CornerMark /></th>
              {mainCols.map(([name, w]) => (
                <th key={name} className={`border border-t-0 border-[#8aa3c4] p-0 font-normal ${w}`}>{name}</th>
              ))}
            </tr>
          </thead>
          <tbody>
            <tr className={`h-[22px] bg-[#b0d3f7] ${song}`}>
              <td className="border-b border-[#8aa3c4] bg-[#c5cad2] pl-1">
                <svg width="4" height="8"><path d="M0 0v8l4-4z" /></svg>
              </td>
              {mainCols.map(([name, , value]) => (
                <td key={name} className="border-r border-[#c9dcf2] p-0 pl-px leading-4">{value}</td>
              ))}
            </tr>
          </tbody>
        </table>
        <div className="mt-auto">
          <HScroll thumb="w-[945px]" />
        </div>
      </div>
      <div className="h-1 shrink-0" />
    </section>
  );
}

function DeviceTree() {
  return (
    <div className="flex w-[218px] shrink-0 bg-linear-to-b from-[#f0f6ff] to-[#cfe0fa]">
      <div className="w-[22px] shrink-0">
        <button className="relative mt-1 ml-0.5 flex h-[90px] w-5 items-start pt-2.5">
          <svg width="20" height="90" className="absolute top-0 left-0">
            <defs>
              <linearGradient id="tab"><stop stopColor="#fff" /><stop offset="1" stopColor="#a9c4ee" /></linearGradient>
            </defs>
            <path d="M20 .5H4L1 4v62q1 6 5 10l14 13" fill="url(#tab)" stroke="#5a7cb8" />
          </svg>
          <span className={`relative text-[13px] leading-5 font-bold [text-orientation:sideways] [writing-mode:vertical-rl] ${hei}`}>设备结构</span>
        </button>
      </div>
      <div className="flex grow flex-col border border-[#3c5f9c] bg-linear-to-r from-[#8fb2e8] to-[#e3eefd] pt-[7px] pr-0.5 pb-[68px] pl-[5px]">
        <div className="flex h-[34px] shrink-0 items-center justify-between bg-[#f4f4f4] pr-1.5 pl-3.5">
          <span className={`text-xs text-[#1e3a78] ${song}`}>单击节点加载工艺流程</span>
          <svg width="24" height="21" viewBox="0 0 24 21"><path d="M12 0c7 0 12 3.500 12 8.500S19 17 12 17l-3 0c-2 2-4 3-7 4 1-2 2-3 2-5C1 14 0 11 0 8.500 0 3.500 5 0 12 0z" fill="#c4c200" /></svg>
        </div>
        <div className="grow border border-[#8aa3c4] bg-[#c9e9ce]" />
      </div>
    </div>
  );
}

function TreeCols() {
  return (
    <colgroup>
      <col className="w-[154px]" />
      <col className="w-[58px]" />
      <col className="w-[73px]" />
      <col className="w-[76px]" />
      <col className="w-[74px]" />
      <col />
    </colgroup>
  );
}

function TreeCell({ node }: { node: Node }) {
  if (node.folder) {
    return (
      <div className="flex h-[19px] items-center pl-[18px]">
        <svg width="36" height="19" className="mr-1 shrink-0">
          <path d="M5.500 0v19M10 9.500h5M23.500 17v2" stroke="#444" strokeDasharray="1 1" />
          <rect x="1.500" y="5.500" width="8" height="8" rx="1" fill="#fff" stroke="#888" />
          <path d="M3.500 9.500h4" stroke="#222" />
          <path d="M18.500 4h6l2 2h5v11h-13z" fill="#f5a800" stroke="#b98a1c" />
          <path d="M22 7h11v10H22z" fill="#ffd73a" stroke="#c8901c" />
        </svg>
        {node.name}
      </div>
    );
  }
  return (
    <div className="flex h-[19px] items-center pl-[18px]">
      <svg width="34" height="19" className="shrink-0">
        <path d={node.last ? 'M5.500 0v19M21.500 0v9.500h10' : 'M5.500 0v19M21.500 0v19M21.500 9.500h10'} fill="none" stroke="#444" strokeDasharray="1 1" />
      </svg>
      <span className={`flex h-[19px] grow items-center gap-1.5 pl-0.5 ${node.selected ? 'bg-linear-to-b from-[#fff3c8] via-[#ffd75e] to-[#ffe9a6]' : ''}`}>
        <svg width="14" height="16" viewBox="0 0 14 16" className="shrink-0">
          <path d="M.5 .5h9l4 4v11H.5z" fill="#f3f9ff" stroke="#6ea3d8" />
          <path d="M9 0v5h5z" fill="#2b74c8" />
        </svg>
        {node.name}
      </span>
    </div>
  );
}

function ProcessTree() {
  return (
    <div className={`flex min-w-0 grow border border-[#8aa3c4] bg-[#c9e9ce] text-xs whitespace-nowrap ${song}`}>
      <div className="flex min-w-0 grow flex-col">
        <table className="w-full shrink-0 table-fixed">
          <TreeCols />
          <thead>
            <tr className="h-[18px] bg-linear-to-b from-[#f4f8fe] to-[#dfe9f6] text-left">
              {['流程', 'BOM工厂', '编写人', '核审人', '状态', 'PP'].map((h, i) => (
                <th key={h} className={`border-r border-[#8aa3c4] p-0 leading-[18px] font-normal ${i ? 'pl-1' : ''}`}>{h}</th>
              ))}
            </tr>
          </thead>
        </table>
        <div className="flex min-h-0 grow flex-col overflow-hidden">
          <table className="-mt-3 w-full table-fixed">
            <TreeCols />
            <tbody>
              {tree.map((n, i) => (
                <tr key={i} className={`h-[19px] ${n.selected ? 'bg-linear-to-b from-[#fff3c8] via-[#ffd75e] to-[#ffe9a6]' : ''}`}>
                  <td className={`p-0 leading-[19px] ${n.selected ? 'bg-[#c9e9ce]' : ''}`}><TreeCell node={n} /></td>
                  <td className="border-r border-[#d3e4d8] p-0 pl-1.5 leading-[19px]">P2</td>
                  <td className="border-r border-[#d3e4d8] p-0 pl-1 leading-[19px]">谭丽红</td>
                  <td className="border-r border-[#d3e4d8] p-0 pl-1 leading-[19px]">{n.checker ?? '谷松'}</td>
                  <td className="border-r border-[#d3e4d8] p-0 pl-1 leading-[19px]">{n.state ?? '已审核'}</td>
                  <td />
                </tr>
              ))}
            </tbody>
          </table>
        </div>
        <HScroll thumb="w-[262px]" right />
      </div>
      <div className="flex pb-4">
        <VScroll before="h-[186px] shrink-0" thumb="h-[88px]" />
      </div>
    </div>
  );
}

function Splitter() {
  return (
    <div className="flex w-[5px] shrink-0 flex-col items-center justify-center gap-1 bg-linear-to-r from-[#7d8ea8] to-[#dce6f3]">
      <svg width="5" height="60">
        <path d="M4 0v8L0 4zM4 52v8l-4-4z" fill="#1e3a78" />
        <path d="M2.500 12v36" stroke="#1e3a78" strokeWidth="2" strokeDasharray="2 2" />
      </svg>
    </div>
  );
}

function ParamPanel() {
  return (
    <section className={`relative flex w-[377px] shrink-0 flex-col bg-[#dfeafb] text-xs whitespace-nowrap ${song}`}>
      <div className="flex h-[25px] shrink-0 items-center bg-linear-to-b from-[#bccfe6] to-[#dbe7f5]" role="tablist">
        <button role="tab" aria-selected="true" className={`flex h-full w-[69px] flex-col items-center justify-between bg-linear-to-b from-[#1d5fc0] to-[#3f86e0] text-[13px] leading-5 font-bold text-white ${hei}`}>
          基本信息
          <svg width="12" height="5"><path d="M0 5h12L6 0z" fill="#fff" /></svg>
        </button>
        <button role="tab" className="pl-[7px]">拓展信息</button>
        <button role="tab" className="pl-5">BOM</button>
        <button role="tab" className="pl-3.5">工时</button>
      </div>
      <div className="flex h-[23px] shrink-0 items-end bg-linear-to-b from-[#bdd4f6] to-[#eaf3ff] pl-1">
        <div className="flex h-[21px] items-stretch">
          <svg width="26" height="21"><path d="M0 21C10 20 14 .5 26 .5V21z" fill="#a9c6f0" /><path d="M0 21C10 20 14 .5 26 .5" fill="none" stroke="#3c5f9c" /></svg>
          <button className={`w-[71px] border-t border-r border-[#3c5f9c] bg-linear-to-b from-[#dbe8fb] to-[#a4c2ef] pr-1.5 text-[13px] leading-5 font-bold ${hei}`}>基本参数</button>
        </div>
      </div>
      <div className="flex min-h-0 grow border-t border-r border-[#3c5f9c] bg-[#8fb2e8] pt-1 pr-0.5">
        <div className="min-w-0 grow overflow-hidden bg-white">
          <table className="w-full table-fixed border-collapse">
            <thead>
              <tr className="h-8 bg-linear-to-b from-[#f1f6fd] to-[#dfe9f6]">
                <th className="w-[35px] border border-[#8aa3c4]"><CornerMark /></th>
                <th className="w-[118px] border border-[#8aa3c4] font-normal">项目</th>
                <th className="w-20 border border-[#8aa3c4] font-normal">参数</th>
                <th className="w-[60px] border border-[#8aa3c4] font-normal">单位</th>
                <th className="w-[60px] border border-[#8aa3c4] font-normal">修改</th>
                <th className="bg-[#cfdced]" />
              </tr>
            </thead>
            <tbody>
              {params.map(([name, value, unit, pink], i) => (
                <tr key={name} className={`h-[22px] ${i % 2 ? 'bg-[#f2f2f2]' : 'bg-white'}`}>
                  <td className="border border-[#8aa3c4] bg-[#dae6f4] p-0 pl-1">
                    {i === 0 && <svg width="4" height="8"><path d="M0 0v8l4-4z" /></svg>}
                  </td>
                  <td className={`border border-[#c5d5ea] p-0 leading-5 ${pink ? 'text-[#c0187c]' : ''} ${i === 0 ? 'bg-[#b0d3f7]' : i % 2 ? '' : 'bg-[#eaf2fc]'}`}>{name}</td>
                  <td className="border border-[#c5d5ea] p-0 leading-5">{value}</td>
                  <td className={`border border-[#c5d5ea] p-0 leading-5 ${i % 2 ? '' : 'bg-[#eaf2fc]'}`}>{unit}</td>
                  <td className="border border-[#c5d5ea] p-0 leading-5">Y</td>
                  <td className="border border-[#c5d5ea] bg-white" />
                </tr>
              ))}
            </tbody>
          </table>
        </div>
        <VScroll before="h-0" thumb="h-[170px]" />
      </div>
      <div className="absolute top-[74px] left-[118px] h-[37px] w-[138px] border-2 border-[#e01010] shadow-[2px_3px_4px_rgba(0,0,0,0.4)]" />
      <div className="absolute top-[349px] left-[133px] h-6 w-[104px] border-2 border-[#c81e1e] shadow-[2px_3px_4px_rgba(0,0,0,0.4)]" />
    </section>
  );
}

function ImeBar() {
  return (
    <div className="absolute right-[5px] bottom-[8px] flex h-6 w-[150px] items-center gap-[10px] bg-white text-[#1c6fd8]">
      <svg width="30" height="30" viewBox="0 0 30 30" className="-ml-1 shrink-0">
        <path d="M1 5L26 0q2 0 3 2l1 21q0 2-2 3L7 30q-2 0-2-2z" fill="#ee5a24" />
        <path d="M23 7c-5-2-13-1-13 3 0 5 13 2 13 8 0 5-9 6-14 3" fill="none" stroke="#fff" strokeWidth="4" />
      </svg>
      <button className={`text-sm leading-5 font-bold ${hei}`}>英</button>
      <svg width="12" height="12" className="shrink-0"><circle cx="2" cy="3" r="2" fill="currentColor" /><path d="M8 5h4c0 4-1 6-4 7 1-2 1-3 0-4z" fill="currentColor" /></svg>
      <FaMicrophone className="h-4 w-4 shrink-0" />
      <FaRegKeyboard className="h-4 w-4 shrink-0" />
      <svg width="13" height="13" className="shrink-0">
        <rect width="6" height="6" rx="1" fill="#6a5be0" />
        <circle cx="10" cy="3" r="2.500" fill="none" stroke="#6a5be0" />
        <rect y="7" width="6" height="6" rx="1" fill="#a0567c" />
        <rect x="7" y="7" width="6" height="6" rx="1" fill="#6a5be0" />
      </svg>
    </div>
  );
}

function EdsWindow() {
  return (
    <main className={`absolute top-[197px] right-[17px] bottom-[38px] left-[633px] flex flex-col border-r border-b-2 border-l border-white border-b-[#dfe6ee] bg-white ${song}`}>
      <div className="flex h-[55px] shrink-0 justify-between bg-white">
        <div className="flex flex-col">
          <div className="flex h-[38px] items-center">
            <svg width="17" height="18" viewBox="0 0 17 18" className="mb-1.5">
              <path d="M4 1h9c4 0 4 9-1 9H8l-2 7H1z" fill="#2fa56c" />
              <path d="M5 3h6M4 7h6M3 3L1 15" stroke="#fff" strokeWidth="2" />
            </svg>
            <span className="mx-1.5 mb-1 h-4 border-l border-[#aaa]" />
            <span className="mr-3.5 pt-1 pl-1 text-xs text-[#1e395b]">兴森快捷</span>
            <QuickAccess />
          </div>
          <button className="h-[17px] w-[57px] rounded-t border border-b-0 border-[#c0391b] bg-[#ef6b42] pt-1 text-xs leading-3 text-white">系统</button>
        </div>
        <h2 className={`ml-auto pt-1 pr-[222px] text-xs leading-5 ${hei}`}>EDS工程系统</h2>
        <div className="flex w-[135px] flex-col items-end">
          <WindowButtons color="text-black" />
          <div className="flex items-end gap-2.5 pt-1.5 pr-2.5">
            <button className="flex items-center gap-2.5 text-[13px] leading-4 text-[#3b4659]">Style <Caret /></button>
            <svg width="24" height="21"><path d="M0 4l10-2v8H0zM11 2l13-2v10H11zM0 12h10v9H0zM11 12h13v9H11z" fill="#2c8a55" /></svg>
          </div>
        </div>
      </div>
      <div className="flex min-h-0 grow border-t border-[#7d93b0]">
        <IconRail />
        <ComponentLibrary />
        <div className="flex min-w-0 grow flex-col border-l border-[#8aa3c4]">
          <div className="flex h-[33px] shrink-0 items-center bg-[#b9cbe4]">
            <div className="flex h-full w-[129px] items-center border-r border-[#8aa3c4] bg-[#eef5fd] pl-1.5 text-[#1e395b]">
              <Bolt size={20} />
              <h3 className="ml-1.5 grow text-[13px] leading-5 font-bold whitespace-nowrap">新流程指示</h3>
              <button aria-label="Close tab" className="mr-2 flex"><svg width="8" height="8"><path d="M1 1l6 6M7 1L1 7" stroke="#55657d" /></svg></button>
            </div>
            <svg width="8" height="5" className="mr-1.5 ml-auto"><path d="M0 0h8L4 5z" fill="#1e3a78" /></svg>
          </div>
          <Ribbon />
          <MainGrid />
          <div className="flex h-1 shrink-0 items-center justify-center bg-linear-to-b from-[#7d8ea8] to-[#c8d4e2] pl-[240px]">
            <svg width="60" height="4"><path d="M0 0h6L3 4zM54 0h6l-3 4z" fill="#1e3a78" /><path d="M12 2h36" stroke="#1e3a78" strokeWidth="2" strokeDasharray="2 2" /></svg>
          </div>
          <div className="flex min-h-0 grow">
            <div className="flex min-w-0 grow flex-col bg-[#eef4fc]">
              <GroupTitle w="w-[150px]" lead="w-[275px]">【3SA65004A0】工艺流程</GroupTitle>
              <div className="flex min-h-0 grow pr-[3px] pb-0.5 pl-[3px]">
                <DeviceTree />
                <Splitter />
                <ProcessTree />
              </div>
            </div>
            <Splitter />
            <ParamPanel />
            <Splitter />
          </div>
        </div>
      </div>
      <footer className="flex h-[33px] shrink-0 items-center border-t-2 border-[#7d93b0] bg-linear-to-b from-[#eaf2fc] to-[#d6e3f3] pl-1.5 text-xs whitespace-nowrap text-[#1e3a78]">
        <svg width="22" height="20" className="mr-2.5"><path d="M0 0h10v9H0zM12 0h10v9H12zM0 11h10v9H0zM12 11h10v9H12z" fill="currentColor" /></svg>
        信息中心
        <FaMale className="mx-1.5 h-[22px] w-[22px]" />
        谷松
        <span className="ml-[60px] w-[173px]">Model:【正式】||DB:【正式库】</span>
        <span>兴森快捷 EMS工程系统 Version: 1.0.1.08</span>
        <a href="#versions" className="ml-auto underline">版本更新记录</a>
        <FaRegClock className="mr-[155px] ml-6 h-5 w-5 shrink-0" />
      </footer>
      <ImeBar />
    </main>
  );
}

export default function App() {
  return (
    <div className="relative flex h-screen overflow-hidden bg-white">
      <div className="flex min-w-0 grow flex-col border-r border-[#777]">
        <EditorHeader />
        <div className="flex min-h-0 grow bg-black">
          <LayerPanel />
          <div className="flex min-w-0 grow overflow-hidden">
            <Board />
          </div>
          <ToolPad />
        </div>
        <CommandBar />
      </div>
      <div className="w-[7px] shrink-0 bg-[#f0f0f0]">
        <div className="mt-6 h-6 border-b-2 border-[#888] bg-[#c9e9ce]" />
      </div>
      <EdsWindow />
    </div>
  );
}
